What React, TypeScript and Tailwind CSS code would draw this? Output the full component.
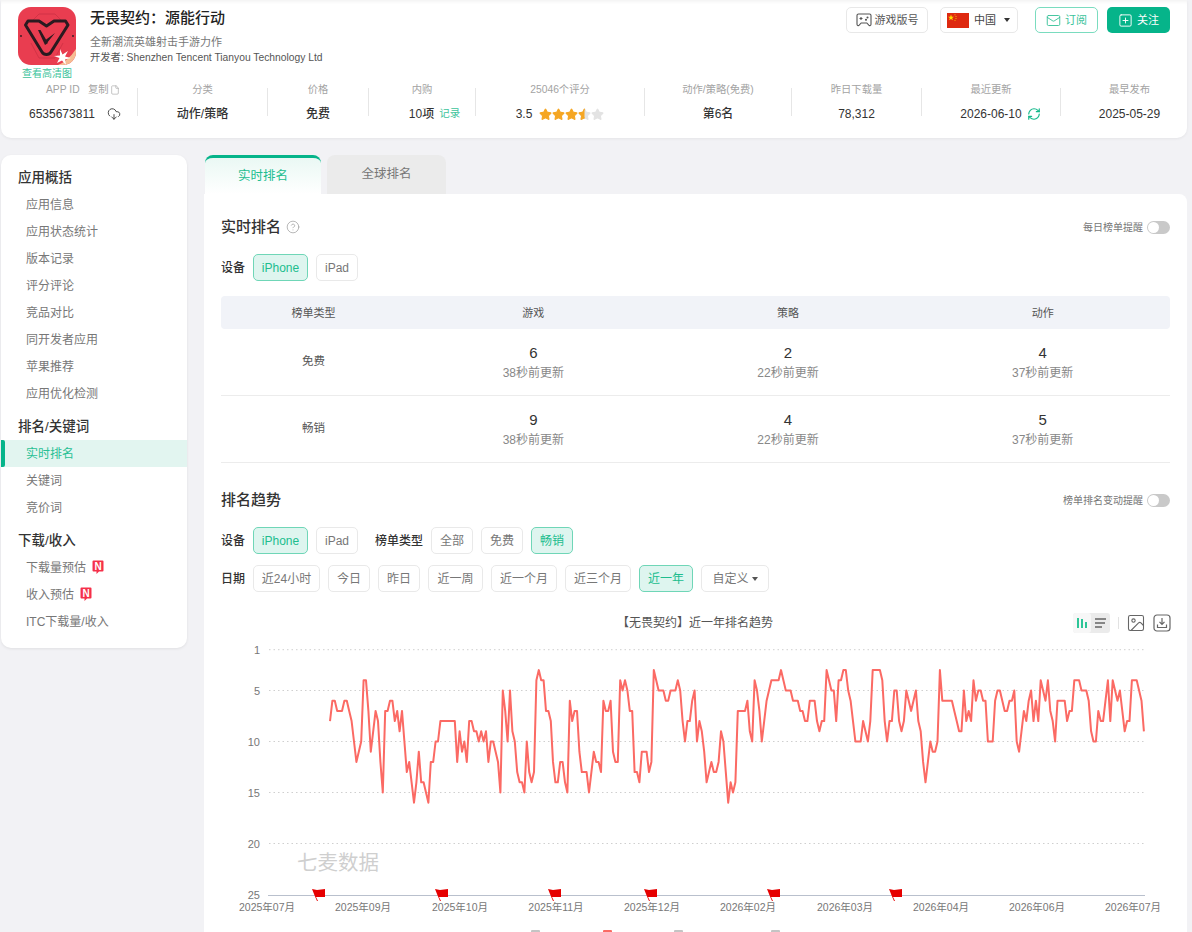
import { CloudDownload, File, Image, Mail, RefreshCw, SquarePlus, Star, StarHalf, CircleHelp } from 'lucide-react';
import { ReactNode } from 'react';

const STATS = [
  { label: '分类', value: '动作/策略', width: 'w-[129px]' },
  { label: '价格', value: '免费', width: 'w-[100px]' },
];

const STATS_2 = [
  { label: '动作/策略(免费)', value: '第6名', width: 'w-[146px]' },
  { label: '昨日下载量', value: '78,312', width: 'w-[129px]' },
];

const MENU = [
  { title: '应用概括', className: '', items: ['应用信息', '应用状态统计', '版本记录', '评分评论', '竞品对比', '同开发者应用', '苹果推荐', '应用优化检测'] },
  { title: '排名/关键词', className: 'mt-[6px]', items: ['实时排名', '关键词', '竞价词'] },
  { title: '下载/收入', className: 'mt-[6px]', items: ['下载量预估', '收入预估', 'ITC下载量/收入'] },
];

const RANK_ROWS = [
  { name: '免费', values: [['6', '38秒前更新'], ['2', '22秒前更新'], ['4', '37秒前更新']] },
  { name: '畅销', values: [['9', '38秒前更新'], ['4', '22秒前更新'], ['5', '37秒前更新']] },
];

const DATES = [
  { text: '近24小时', width: 'w-[67px]' },
  { text: '今日', width: 'w-[42px]' },
  { text: '昨日', width: 'w-[42px]' },
  { text: '近一周', width: 'w-[55px]' },
  { text: '近一个月', width: 'w-[66px]' },
  { text: '近三个月', width: 'w-[66px]' },
  { text: '近一年', width: 'w-[54px]', active: true },
];

// ranks read off the reference, one point every 2.4px
const SEG_1 = [8, 6, 6, 7, 7, 7, 6, 6, 7, 8, 10, 12, 11, 10, 4, 4, 7, 11, 9, 7, 8, 12, 15, 7, 7, 6, 6, 8, 7, 9, 7, 10, 13, 12, 14, 16, 14, 11, 14, 14, 15, 16, 12, 12, 10, 10, 8, 8, 8, 8, 8, 8, 8, 12, 9, 11, 10, 12, 8, 8, 9, 9, 10, 9, 10, 9, 12, 10, 10, 11, 12, 15, 5, 7, 10, 5, 9, 10, 13, 14, 14, 15, 10, 13, 14, 13, 4, 3, 4, 4, 7, 7, 8];
const SEG_2 = [12, 14, 14, 12, 12, 14, 15, 6, 8, 7, 7, 11, 13, 13, 13, 15, 13, 11, 12, 12, 13, 6, 7, 7, 6, 11, 12, 12, 4, 5, 4, 5, 7, 7, 13, 13, 14, 11, 11, 11, 13, 12, 3, 4, 5, 5, 5, 6, 6, 5, 5, 5, 4, 5, 8, 10, 8, 8, 6, 5, 10, 8, 9, 11, 14, 13, 12, 13, 13, 12, 9, 10, 13, 16, 14, 15, 14, 7, 7, 7, 7, 6, 9, 10, 4, 5, 7, 10, 8, 6, 5, 4, 4, 4, 4, 3, 4, 5, 5, 5, 6, 6, 6, 7, 7, 8, 8, 6, 6, 6, 8, 9, 8, 8, 3, 4, 5, 5, 8, 4, 4, 3, 3, 5, 6, 8, 10, 10];
const SEG_3 = [10, 8, 9, 10, 8, 3, 3, 3, 3, 4, 8, 10, 8, 8, 5, 5, 8, 9, 8, 5, 6, 7, 6, 5, 8, 9, 12, 14, 12, 10, 11, 11, 10, 3, 6, 6, 6, 6, 6, 7, 8, 9, 9, 5, 8, 7, 8, 4, 6, 5, 5, 6, 6, 10, 10, 10, 6, 5, 5, 6, 7, 7, 6, 6, 5, 10, 11, 9, 7, 8, 6, 5, 8, 6, 8, 4, 5, 6, 4, 7, 8, 10, 6, 6, 6, 6, 8, 7, 7, 4, 4, 4, 5, 5, 5, 6, 9, 10, 10, 7, 8, 8, 6, 4, 8, 4, 5, 6, 5, 7, 9, 8, 8, 4, 4, 4, 5, 6, 9];

const rankY = (rank: number) => 649.7 + (rank - 1) * 10.2;

const toPoints = (ranks: number[], startX: number) =>
  ranks.map((rank, i) => `${(startX + i * 2.4).toFixed(1)},${rankY(rank).toFixed(1)}`).join(' ');

const LINE_POINTS = [toPoints(SEG_1, 330), toPoints(SEG_2, 553), toPoints(SEG_3, 860.7)].join(' ');

const Y_TICKS = [1, 5, 10, 15, 20];
const X_LABELS = [
  ['2025年07月', 267], ['2025年09月', 363], ['2025年10月', 460], ['2025年11月', 556], ['2025年12月', 652],
  ['2026年02月', 748], ['2026年03月', 845], ['2026年04月', 941], ['2026年06月', 1037], ['2026年07月', 1133],
] as const;
const FLAGS = [312, 435, 548, 644, 767, 889];

function Pill({ children, active, width }: { children: ReactNode; active?: boolean; width: string }) {
  return (
    <div className={`${width} h-[27px] shrink-0 rounded-[5px] border text-[12px] flex items-center justify-center ${active ? 'bg-[#def5ef] border-[#6fd6b7] text-[#20bd8e]' : 'bg-white border-[#e9e9e9] text-[#777]'}`}>
      {children}
    </div>
  );
}

function Toggle() {
  return (
    <div className="w-[23px] h-[13px] rounded-full bg-[#c9c9c9] p-px">
      <div className="w-[11px] h-[11px] rounded-full bg-white" />
    </div>
  );
}

function NewBadge() {
  return (
    <svg width="12" height="14" viewBox="0 0 12 14" className="ml-[6px] -mt-[2px]">
      <path d="M1.5 0.5h9a1 1 0 0 1 1 1v9a1 1 0 0 1-1 1H7l-2.5 2.5v-2.5H1.5a1 1 0 0 1-1-1v-9a1 1 0 0 1 1-1z" fill="#f5304a" />
      <text x="6" y="9.6" textAnchor="middle" fontSize="10" fontWeight="700" fill="#fff" fontFamily="Liberation Sans">N</text>
    </svg>
  );
}

function AppIcon() {
  return (
    <svg width="58" height="58" viewBox="0 0 58 58" className="rounded-[13px]">
      <rect width="58" height="58" fill="#e93d50" />
      <path d="M15 13 L21 7 H37 L43 13 M13 36 L21 51 H37 L45 36" fill="none" stroke="#c92f42" strokeWidth="0.7" />
      <path d="M10 14 L7.5 18 L24 45 Q25.5 47.5 28.5 47.5 Q31.5 47.5 33 45 L50 18 L47.5 14 H36 L28.5 19 L21 14 Z" fill="none" stroke="#2a1a20" strokeWidth="3" strokeLinejoin="round" />
      <path d="M20 23 L22.5 23 L30 36 L27 38 Z M37 26 L29 36 L27.5 33 Z" fill="#2a1a20" />
      <circle cx="3" cy="29" r="0.9" fill="#2a1a20" />
      <circle cx="55" cy="29" r="0.9" fill="#2a1a20" />
      <path d="M58 42 V58 H40 Q50 54 58 42 Z" fill="#f6bd93" />
      <path d="M42 42 L44.5 47.5 L50 44 L47 49.5 L53 51 L47 52.5 L48 58 L44 53.5 L39 56 L41.5 51 L36 49 L42 48.5 Z" fill="#fff" />
    </svg>
  );
}

function ChinaFlag() {
  return (
    <svg width="22" height="15" viewBox="0 0 22 15" className="shrink-0">
      <rect width="22" height="15" fill="#de2910" />
      <path d="M4 1.5l.8 2.2 2.2 0-1.8 1.4.7 2.2L4 6l-1.9 1.3.7-2.2L1 3.7l2.2 0z" fill="#ffde00" />
      <circle cx="8" cy="1.8" r=".5" fill="#ffde00" />
      <circle cx="9" cy="3.6" r=".5" fill="#ffde00" />
      <circle cx="9" cy="5.6" r=".5" fill="#ffde00" />
      <circle cx="8" cy="7.2" r=".5" fill="#ffde00" />
    </svg>
  );
}

function GameIcon() {
  return (
    <svg width="16" height="14" viewBox="0 0 16 14" fill="none" stroke="#555" strokeWidth="1.1" className="shrink-0">
      <path d="M2.5 1H13.5A1.5 1.5 0 0 1 15 2.5V11.2A1.3 1.3 0 0 1 12.8 12.2L10.8 10H5.2L3.2 12.2A1.3 1.3 0 0 1 1 11.2V2.5A1.5 1.5 0 0 1 2.5 1Z" />
      <path d="M3.5 5.5H6.5M5 4V7" />
      <circle cx="11.5" cy="4.5" r=".5" fill="#555" />
      <circle cx="10" cy="6.8" r=".5" fill="#555" />
    </svg>
  );
}

function StatLabel({ children }: { children: ReactNode }) {
  return <div className="h-[12px] leading-[12px] text-[10.3px] text-[#a3a3a3] whitespace-nowrap">{children}</div>;
}

function Divider() {
  return <div className="w-px h-[28px] mt-[4px] bg-[#e6e6e6] shrink-0" />;
}

function StatCell({ label, value, width }: { label: string; value: string; width: string }) {
  return (
    <div className={`${width} shrink-0 flex flex-col items-center`}>
      <StatLabel>{label}</StatLabel>
      <div className="mt-[11px] h-[14px] leading-[14px] text-[12px] font-medium text-[#333]">{value}</div>
    </div>
  );
}

function Header() {
  return (
    <div className="ml-px w-[1186px] h-[138px] bg-white rounded-b-[10px] shadow-[inset_0_4px_4px_-3px_rgba(0,0,0,0.07),0_1px_3px_rgba(0,0,0,0.06)] pt-[7px]">
      <div className="flex pl-[17px] pr-[17px]">
        <div className="w-[58px] shrink-0 flex flex-col items-center">
          <AppIcon />
          <div className="mt-[2px] h-[13px] leading-[13px] text-[10px] text-[#3cc39b] whitespace-nowrap">查看高清图</div>
        </div>
        <div className="ml-[14px] flex-1">
          <div className="h-[22px] leading-[22px] text-[15px] font-medium text-[#222]">无畏契约：源能行动</div>
          <div className="mt-[6px] h-[14px] leading-[14px] text-[11px] text-[#777]">全新潮流英雄射击手游力作</div>
          <div className="mt-[2px] h-[14px] leading-[14px] text-[10.3px] text-[#555]">开发者: Shenzhen Tencent Tianyou Technology Ltd</div>
        </div>
        <div className="flex items-start text-[11px]">
          <div className="w-[82px] h-[26px] rounded-[5px] border border-[#e8e8e8] flex items-center justify-center gap-[3px] text-[#555]">
            <GameIcon />
            游戏版号
          </div>
          <div className="ml-[12px] w-[78px] h-[26px] rounded-[5px] border border-[#e8e8e8] flex items-center pl-[6px] text-[#444]">
            <ChinaFlag />
            <span className="ml-[5px]">中国</span>
            <span className="ml-[8px] border-x-[3.5px] border-t-[4px] border-x-transparent border-t-[#333]" />
          </div>
          <div className="ml-[17px] w-[63px] h-[26px] rounded-[5px] border border-[#7adcbf] flex items-center justify-center gap-[4px] text-[#3cc39b]">
            <Mail size={15} strokeWidth={1.5} />
            订阅
          </div>
          <div className="ml-[9px] w-[63px] h-[26px] rounded-[5px] bg-[#06b48a] flex items-center justify-center gap-[4px] text-white">
            <SquarePlus size={15} strokeWidth={1.5} />
            关注
          </div>
        </div>
      </div>

      <div className="flex mt-[4px] pl-[14px]">
        <div className="w-[122px] shrink-0">
          <div className="h-[12px] flex items-center pl-[31px] text-[10.3px] text-[#a3a3a3]">
            <span className="w-[42px]">APP ID</span>
            <span>复制</span>
            <File size={10} strokeWidth={1.5} className="ml-px" />
          </div>
          <div className="mt-[11px] h-[14px] flex items-center pl-[14px] text-[12px] text-[#333]">
            6535673811
            <CloudDownload size={14} strokeWidth={1.5} className="ml-[12px]" />
          </div>
        </div>
        <Divider />
        {STATS.map((s) => (
          <div key={s.label} className="flex shrink-0">
            <StatCell {...s} />
            <Divider />
          </div>
        ))}
        <div className="w-[106px] shrink-0 flex flex-col items-center">
          <StatLabel>内购</StatLabel>
          <div className="mt-[11px] h-[14px] pl-[25px] flex items-center text-[12px] font-medium text-[#333]">
            10项<span className="ml-[5px] text-[10.5px] font-normal text-[#3cc39b]">记录</span>
          </div>
        </div>
        <Divider />
        <div className="w-[168px] shrink-0 flex flex-col items-center">
          <StatLabel>25046个评分</StatLabel>
          <div className="mt-[11px] h-[14px] flex items-center text-[12px] text-[#333]">
            <span className="mr-[7px]">3.5</span>
            {[0, 1, 2].map((i) => (
              <Star key={i} size={13} fill="#f5a623" stroke="#f5a623" />
            ))}
            <div className="relative w-[13px] h-[13px]">
              <Star size={13} fill="#e3e3e3" stroke="#e3e3e3" className="absolute inset-0" />
              <StarHalf size={13} fill="#f5a623" stroke="#f5a623" className="absolute inset-0" />
            </div>
            <Star size={13} fill="#e3e3e3" stroke="#e3e3e3" />
          </div>
        </div>
        <Divider />
        {STATS_2.map((s) => (
          <div key={s.label} className="flex shrink-0">
            <StatCell {...s} />
            <Divider />
          </div>
        ))}
        <div className="w-[138px] shrink-0 flex flex-col items-center">
          <StatLabel>最近更新</StatLabel>
          <div className="mt-[11px] h-[14px] pl-[19px] flex items-center text-[12px] font-medium text-[#333]">
            2026-06-10
            <RefreshCw size={14} strokeWidth={2} className="ml-[5px] text-[#12b88a]" />
          </div>
        </div>
        <Divider />
        <div className="w-[125px] shrink-0 pl-[12px]">
          <StatCell label="最早发布" value="2025-05-29" width="w-full" />
        </div>
      </div>
    </div>
  );
}

function Sidebar() {
  return (
    <aside className="ml-px w-[186px] h-[493px] shrink-0 bg-white rounded-[10px] shadow-[0_1px_3px_rgba(0,0,0,0.08)] pt-[9px] overflow-hidden">
      {MENU.map((group) => (
        <div key={group.title} className={group.className}>
          <div className="h-[27px] leading-[27px] pl-[17px] text-[13.5px] font-medium text-[#333]">{group.title}</div>
          {group.items.map((item) => {
            const active = item === '实时排名';
            return (
              <div key={item} className={`relative h-[27px] flex items-center pl-[25px] text-[12px] ${active ? 'bg-[#e2f5f0] text-[#28c094]' : 'text-[#777]'}`}>
                {active && <div className="absolute left-0 top-0 bottom-0 w-[4px] rounded-r-[2px] bg-[#06b48a]" />}
                {item}
                {(item === '下载量预估' || item === '收入预估') && <NewBadge />}
              </div>
            );
          })}
        </div>
      ))}
    </aside>
  );
}

function RankChart() {
  return (
    <svg width="983" height="292" viewBox="204 640 983 292" className="block -mx-[17px] mt-[7px]" fontFamily="Liberation Sans, Noto Sans CJK SC, sans-serif">
      {Y_TICKS.map((tick) => (
        <g key={tick}>
          <line x1="269" x2="1145" y1={rankY(tick)} y2={rankY(tick)} stroke="#cfcfcf" strokeDasharray="1.5 3" />
          <text x="260" y={rankY(tick) + 4} textAnchor="end" fontSize="11" fill="#777">{tick}</text>
        </g>
      ))}
      <line x1="268" x2="1145" y1="895.5" y2="895.5" stroke="#b9c0cd" />
      <text x="260" y="899" textAnchor="end" fontSize="11" fill="#777">25</text>
      {X_LABELS.map(([label, x]) => (
        <text key={label} x={x} y="911" textAnchor="middle" fontSize="10.5" fill="#777">{label}</text>
      ))}
      <text x="297" y="870" fontSize="20.5" fill="#cfcfcf">七麦数据</text>
      <polyline points={LINE_POINTS} fill="none" stroke="#fb6a64" strokeWidth="2" strokeLinejoin="round" />
      {FLAGS.map((x) => (
        <path key={x} transform={`translate(${x} 889)`} d="M0 0 L5 1 L13 0 L13 8 L6.5 8 L4 8 L6 12 L5 12 L3 7.5 Z" fill="#e60000" />
      ))}
      <rect x="531" y="930" width="9" height="4" rx="1" fill="#c4c4c4" />
      <rect x="603" y="930" width="9" height="4" rx="1" fill="#fb6a64" />
      <rect x="674" y="930" width="9" height="4" rx="1" fill="#c4c4c4" />
      <rect x="771" y="930" width="9" height="4" rx="1" fill="#c4c4c4" />
    </svg>
  );
}

function Main() {
  return (
    <main className="ml-[17px] w-[983px] shrink-0">
      <div className="flex h-[39px]">
        <div className="ml-px w-[116px] rounded-t-[8px] border-t-[3px] border-[#06b48a] bg-gradient-to-b from-[#eaf8f4] to-white flex items-center justify-center text-[12.5px] text-[#22bd8f]">
          实时排名
        </div>
        <div className="ml-[6px] w-[119px] rounded-t-[8px] bg-[#ebebeb] flex items-center justify-center pb-[1px] text-[12.5px] text-[#777]">
          全球排名
        </div>
      </div>
      <div className="bg-white rounded-tr-[8px] px-[17px] pt-[20px] h-[738px]">
        <div className="h-[26px] flex items-center justify-between">
          <div className="flex items-center text-[15px] font-medium text-[#333]">
            实时排名
            <CircleHelp size={14} strokeWidth={1.2} className="ml-[5px] text-[#999]" />
          </div>
          <div className="flex items-center gap-[4px] text-[10px] text-[#777]">
            每日榜单提醒
            <Toggle />
          </div>
        </div>

        <div className="mt-[14px] flex items-center gap-[8px]">
          <span className="w-[24px] text-[12px] font-medium text-[#333]">设备</span>
          <Pill width="w-[55px]" active>iPhone</Pill>
          <Pill width="w-[42px]">iPad</Pill>
        </div>

        <div className="mt-[15px]">
          <div className="grid grid-cols-[185px_1fr_1fr_1fr] h-[33px] items-center rounded-[4px] bg-[#f1f3f8] pt-px text-[11px] text-[#555] text-center">
            <div>榜单类型</div>
            <div>游戏</div>
            <div>策略</div>
            <div>动作</div>
          </div>
          {RANK_ROWS.map((row) => (
            <div key={row.name} className="grid grid-cols-[185px_1fr_1fr_1fr] h-[67px] items-center border-b border-[#ececec] text-center">
              <div className="text-[11.5px] text-[#555]">{row.name}</div>
              {row.values.map(([rank, time], i) => (
                <div key={i} className="flex flex-col items-center pt-[2px]">
                  <div className="h-[20px] leading-[20px] text-[15px] text-[#333]">{rank}</div>
                  <div className="h-[20px] leading-[20px] text-[12px] text-[#888]">{time}</div>
                </div>
              ))}
            </div>
          ))}
        </div>

        <div className="mt-[24px] h-[26px] flex items-center justify-between">
          <div className="text-[15px] font-medium text-[#333]">排名趋势</div>
          <div className="flex items-center gap-[4px] text-[10px] text-[#777]">
            榜单排名变动提醒
            <Toggle />
          </div>
        </div>

        <div className="mt-[14px] flex items-center gap-[8px]">
          <span className="w-[24px] text-[12px] font-medium text-[#333]">设备</span>
          <Pill width="w-[55px]" active>iPhone</Pill>
          <Pill width="w-[42px]">iPad</Pill>
          <span className="ml-[9px] w-[48px] text-[12px] font-medium text-[#333]">榜单类型</span>
          <Pill width="w-[42px]">全部</Pill>
          <Pill width="w-[42px]">免费</Pill>
          <Pill width="w-[42px]" active>畅销</Pill>
        </div>

        <div className="mt-[11px] flex items-center gap-[8px]">
          <span className="w-[24px] text-[12px] font-medium text-[#333]">日期</span>
          {DATES.map((d) => (
            <Pill key={d.text} width={d.width} active={d.active}>{d.text}</Pill>
          ))}
          <Pill width="w-[68px]">
            自定义
            <span className="ml-[3px] border-x-[3.5px] border-t-[4px] border-x-transparent border-t-[#555]" />
          </Pill>
        </div>

        <div className="mt-[21px] h-[20px] relative flex items-center justify-center">
          <div className="text-[12px] text-[#555] -ml-[1px]">【无畏契约】近一年排名趋势</div>
          <div className="absolute right-[-1px] top-0 h-[20px] flex items-center">
            <div className="w-[37px] h-[20px] rounded-[3px] bg-[#ebebeb] flex">
              <div className="w-[18px] h-[20px] rounded-[3px] bg-[#f7f7f7] flex items-center justify-center">
                <svg width="12" height="12" viewBox="0 0 12 12" stroke="#0bbd87" strokeWidth="1.7">
                  <path d="M2 1V11M6 2V11M10 5V11" />
                </svg>
              </div>
              <div className="flex-1 flex items-center justify-center">
                <svg width="13" height="12" viewBox="0 0 13 12" stroke="#666" strokeWidth="1.3">
                  <path d="M1 2H12M1 6H11M1 10H8" />
                </svg>
              </div>
            </div>
            <div className="ml-[8px] w-px h-[12px] bg-[#e2e2e2]" />
            <Image size={20} strokeWidth={1.3} className="ml-[7px] text-[#666]" />
            <svg width="18" height="18" viewBox="0 0 18 18" fill="none" stroke="#666" strokeWidth="1.2" className="ml-[7px]">
              <rect x="1" y="1" width="16" height="16" rx="3" />
              <path d="M9 4V10M6.5 7.8L9 10.3L11.5 7.8M4.5 10.5V13.5H13.5V10.5" />
            </svg>
          </div>
        </div>

        <RankChart />
      </div>
    </main>
  );
}

export default function App() {
  return (
    <div className="w-[1192px] h-[932px] overflow-hidden bg-[#f2f2f5] [font-family:'Liberation_Sans','Noto_Sans_CJK_SC',sans-serif]">
      <Header />
      <div className="flex items-start mt-[17px]">
        <Sidebar />
        <Main />
      </div>
    </div>
  );
}
